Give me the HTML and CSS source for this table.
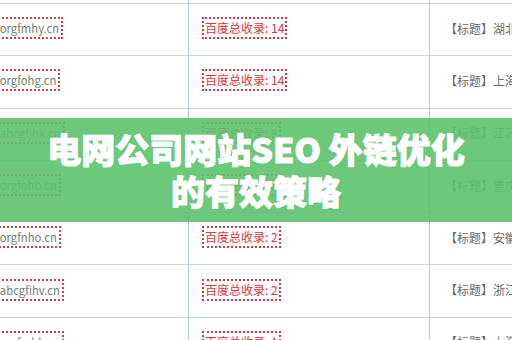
FILE: index.html
```html
<!DOCTYPE html>
<html lang="zh-CN">
<head>
<meta charset="utf-8">
<link rel="stylesheet" href="styles.css">
</head>
<body>
<div class="page">
  <div class="table">
    <div class="row sliver"><div class="cell c1"></div><div class="cell c2"></div><div class="cell c3"></div></div>
    <div class="row"><div class="cell c1"><span class="dom">www.orgfmhy.cn</span></div><div class="cell c2"><span class="rec">百度总收录: 14</span></div><div class="cell c3"><span class="tit">【标题】湖北电网公司网站</span></div></div>
    <div class="row"><div class="cell c1"><span class="dom">www.orgfohg.cn</span></div><div class="cell c2"><span class="rec">百度总收录: 14</span></div><div class="cell c3"><span class="tit">【标题】上海电网公司网站</span></div></div>
    <div class="row"><div class="cell c1"><span class="dom">www.abcgfjhk.cn</span></div><div class="cell c2"><span class="rec">百度总收录: 8</span></div><div class="cell c3"><span class="tit">【标题】江苏电网公司网站</span></div></div>
    <div class="row"><div class="cell c1"><span class="dom">www.orgfohb.cn</span></div><div class="cell c2"><span class="rec">百度总收录: 8</span></div><div class="cell c3"><span class="tit">【标题】重庆电网公司网站</span></div></div>
    <div class="row"><div class="cell c1"><span class="dom">www.orgfnho.cn</span></div><div class="cell c2"><span class="rec">百度总收录: 2</span></div><div class="cell c3"><span class="tit">【标题】安徽电网公司网站</span></div></div>
    <div class="row"><div class="cell c1"><span class="dom">www.abcgfihv.cn</span></div><div class="cell c2"><span class="rec">百度总收录: 2</span></div><div class="cell c3"><span class="tit">【标题】浙江电网公司网站</span></div></div>
    <div class="row"><div class="cell c1"><span class="dom">www.orgfmhk.cn</span></div><div class="cell c2"><span class="rec">百度总收录: 1</span></div><div class="cell c3"><span class="tit">【标题】上海电网公司网站</span></div></div>
  </div>
  <div class="banner">
    <h1 class="title">电网公司网站SEO 外链优化<br>的有效策略</h1>
  </div>
</div>
</body>
</html>
```
FILE: styles.css
```css
html, body {
  margin: 0;
  padding: 0;
  background: #ffffff;
}
.page {
  position: relative;
  width: 512px;
  height: 340px;
  overflow: hidden;
  font-family: "Noto Sans CJK SC", "Noto Sans", sans-serif;
}
.table {
  display: flex;
  flex-direction: column;
}
.row {
  display: grid;
  grid-template-columns: 189px 241px 1fr;
  height: 52.3px;
  box-sizing: border-box;
  border-bottom: 1px solid #bcd6e6;
  flex: none;
}
.row.sliver {
  height: 4px;
}
.cell {
  display: flex;
  align-items: center;
  padding-bottom: 3px;
  box-sizing: border-box;
  white-space: nowrap;
  overflow: hidden;
}
.c1 {
  border-right: 1px solid #a9cbe3;
}
.c2 {
  border-right: 1px solid #a9cbe3;
  padding-left: 13px;
}
.c3 {
  padding-left: 15px;
}
.dom {
  margin-left: -33px;
  font-size: 11.3px;
  line-height: 18px;
  color: #737d74;
  border: 2px dotted #c8404f;
  padding: 0 2px 0 1px;
}
.rec {
  font-size: 12px;
  line-height: 18px;
  color: #e0353b;
  border: 2px dotted #c8404f;
  padding: 0 1px;
}
.tit {
  font-size: 12px;
  color: #6a6a6a;
}
.banner {
  position: absolute;
  left: 0;
  top: 118px;
  width: 100%;
  height: 104px;
  background: rgba(92, 194, 109, 0.9);
  display: flex;
  align-items: center;
  justify-content: center;
}
.title {
  margin: 0;
  font-size: 34px;
  line-height: 42px;
  font-weight: 900;
  color: #ffffff;
  text-align: center;
  -webkit-text-stroke: 1px #ffffff;
}
```
